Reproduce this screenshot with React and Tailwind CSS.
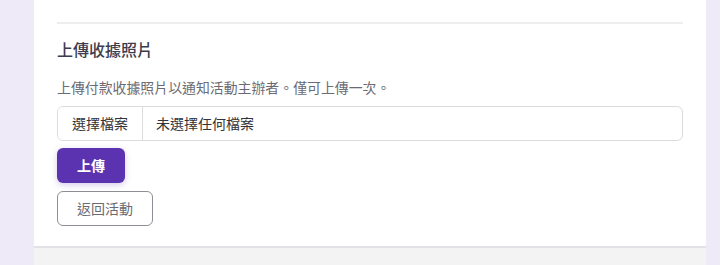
export default function App() {
  return (
    <div
      className="flex h-[265px] w-[720px] overflow-hidden bg-[#f3f3f4]"
      style={{ fontFamily: '"Noto Sans CJK TC", "Noto Sans", sans-serif' }}
    >
      {/* 左側欄 */}
      <div className="w-[34px] shrink-0 bg-[#eeeaf8]" />

      {/* 中間內容 */}
      <div className="flex flex-1 flex-col">
        <div className="bg-white px-[23px] pt-[22px] pb-[20px] border-b-2 border-[#e2e2e6]">
          <div className="border-t-2 border-[#eeeeee]" />

          <h2 className="mt-[13px] text-[16px] leading-6 font-medium text-[#3c3c4e]">
            上傳收據照片
          </h2>

          <p className="mt-[16px] text-[13.9px] leading-5 text-[#6b6b72]">
            上傳付款收據照片以通知活動主辦者。僅可上傳一次。
          </p>

          {/* 檔案選擇 */}
          <label className="mt-[9px] flex h-[35px] items-stretch overflow-hidden rounded-md border border-[#dcdcdf] text-[14px] text-[#333338]">
            <span className="flex items-center border-r border-[#dcdcdf] bg-white px-[14px]">
              選擇檔案
            </span>
            <span className="flex items-center px-[13px]">未選擇任何檔案</span>
          </label>

          <div className="mt-[7px] flex flex-col items-start gap-[8px]">
            <button
              type="button"
              className="h-[35px] rounded-md bg-[#5b33b1] px-5 text-[14px] font-semibold text-white shadow-[0_2px_6px_rgba(91,51,177,0.25)]"
            >
              上傳
            </button>
            <button
              type="button"
              className="h-[35px] rounded-md border border-[#8e8e96] bg-white px-[19px] text-[14px] text-[#6b6b72]"
            >
              返回活動
            </button>
          </div>
        </div>
      </div>

      {/* 右側欄 */}
      <div className="w-[14px] shrink-0 bg-[#eeeaf8]" />
    </div>
  )
}
